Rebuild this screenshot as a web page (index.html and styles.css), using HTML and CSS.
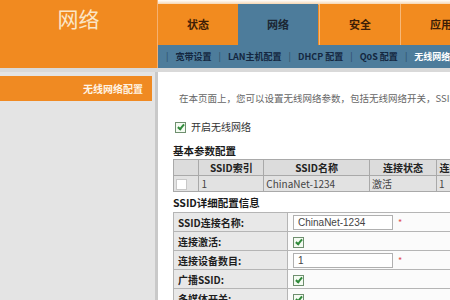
FILE: index.html
```html
<!DOCTYPE html>
<html lang="zh-CN">
<head>
    <meta charset="UTF-8">
    <title>网络 - 无线网络配置</title>
    <link rel="stylesheet" href="styles.css">
</head>
<body>
    <div class="top">
        <div class="brand">网络</div>
        <div class="nav">
            <div class="tabs">
                <div class="tab">状态</div>
                <div class="tab on">网络</div>
                <div class="tab">安全</div>
                <div class="tab">应用</div>
            </div>
            <div class="subnav">
                <span class="sep">|</span><span>宽带设置</span>
                <span class="sep">|</span><span>LAN主机配置</span>
                <span class="sep">|</span><span>DHCP 配置</span>
                <span class="sep">|</span><span>QoS 配置</span>
                <span class="sep">|</span><span class="cur">无线网络配置</span>
            </div>
        </div>
    </div>
    <div class="rule"></div>

    <div class="main">
        <div class="side">
            <div class="sideitem">无线网络配置</div>
        </div>
        <div class="content">
            <p class="desc">在本页面上，您可以设置无线网络参数，包括无线网络开关，SSID配置等。</p>
            <label class="enable"><span class="chk on"></span>开启无线网络</label>

            <h4>基本参数配置</h4>
            <table class="grid">
                <tr>
                    <th class="c0"></th>
                    <th class="c1">SSID索引</th>
                    <th class="c2">SSID名称</th>
                    <th class="c3">连接状态</th>
                    <th class="c4">连接设备数目</th>
                </tr>
                <tr>
                    <td><span class="chk"></span></td>
                    <td>1</td>
                    <td>ChinaNet-1234</td>
                    <td>激活</td>
                    <td>1</td>
                </tr>
            </table>

            <h4 class="sub">SSID详细配置信息</h4>
            <table class="detail">
                <tr>
                    <th>SSID连接名称:</th>
                    <td><span class="field">ChinaNet-1234</span><span class="req">*</span></td>
                </tr>
                <tr>
                    <th>连接激活:</th>
                    <td><span class="chk on"></span></td>
                </tr>
                <tr>
                    <th>连接设备数目:</th>
                    <td><span class="field">1</span><span class="req">*</span></td>
                </tr>
                <tr>
                    <th>广播SSID:</th>
                    <td><span class="chk on"></span></td>
                </tr>
                <tr>
                    <th>多媒体开关:</th>
                    <td><span class="chk on"></span></td>
                </tr>
            </table>
        </div>
    </div>
</body>
</html>
```

FILE: styles.css
```css
body {
    margin: 0;
    width: 450px;
    height: 300px;
    overflow: hidden;
    font-family: "Noto Sans CJK SC", "Liberation Sans", sans-serif;
    background-color: #e4e4e4;
}
.top {
    display: flex;
    height: 68px;
    background-color: #f18a20;
}
.brand {
    flex-shrink: 0;
    width: 157px;
    padding-top: 5px;
    text-align: center;
    font-size: 21px;
    line-height: 26px;
    color: #fbe6c6;
    border-right: 1px solid #f5b070;
}
.nav {
    flex: 1;
    min-width: 0;
    display: flex;
    flex-direction: column;
    overflow: hidden;
}
.tabs {
    display: flex;
    height: 45px;
    padding-top: 4px;
    box-sizing: border-box;
    background: linear-gradient(#ffffff, #f6d7b4 4px, #f18a20 5px);
}
.tab {
    flex-shrink: 0;
    width: 80px;
    padding-top: 12px;
    text-align: center;
    font-size: 11px;
    font-weight: bold;
    line-height: 16px;
    color: #3e1e06;
    background-color: #f28b1f;
    border-left: 1px solid #f7b878;
}
.tab:first-child {
    border-left: none;
}
.tab.on {
    background-color: #4d7c9b;
    color: #1b2633;
    border-left: none;
}
.tab.on + .tab {
    margin-left: 1px;
}
.subnav {
    flex: 1;
    display: flex;
    align-items: center;
    padding-left: 8px;
    background-color: #4d7c9b;
    font-size: 9px;
    font-weight: bold;
    color: #142740;
    white-space: nowrap;
}
.subnav .sep {
    margin: 0 7px;
    font-weight: normal;
    color: #2c4a66;
}
.subnav .sep:first-child {
    margin-left: 0;
}
.subnav .cur {
    color: #ffffff;
}
.rule {
    height: 4px;
    background-color: #d9d9d9;
}
.main {
    display: flex;
    height: 228px;
}
.side {
    flex-shrink: 0;
    width: 155px;
    padding-top: 4px;
    border-right: 3px solid #c9c9c9;
    background-color: #e4e4e4;
}
.sideitem {
    width: 152px;
    height: 25px;
    padding-right: 9px;
    box-sizing: border-box;
    text-align: right;
    font-size: 10px;
    font-weight: bold;
    line-height: 25px;
    color: #fff4e6;
    background-color: #f08a22;
}
.content {
    flex: 1;
    min-width: 0;
    padding-left: 15px;
    background-color: #ffffff;
    overflow: hidden;
    white-space: nowrap;
}
.desc {
    margin: 19px 0 0 6px;
    font-size: 9.5px;
    line-height: 14px;
    color: #666666;
}
.enable {
    display: flex;
    align-items: center;
    margin: 15px 0 0 2px;
    font-size: 10px;
    line-height: 14px;
    color: #333333;
}
.enable .chk {
    margin-right: 5px;
}
.chk {
    display: inline-block;
    width: 9px;
    height: 9px;
    border: 1px solid #9a9a9a;
    background-color: #ffffff;
    vertical-align: middle;
    position: relative;
}
.chk.on {
    border-color: #6f8f6f;
    background-color: #f4fbf2;
}
.chk.on::after {
    content: "";
    position: absolute;
    left: 3px;
    top: 0;
    width: 2px;
    height: 5px;
    border: solid #2f8a3a;
    border-width: 0 2px 2px 0;
    transform: rotate(40deg);
}
h4 {
    margin: 10px 0 1px;
    font-size: 10.5px;
    line-height: 14px;
    color: #1a1a1a;
}
h4.sub {
    margin-top: 4px;
    margin-bottom: 2px;
}
.grid {
    width: 330px;
    border-collapse: collapse;
    table-layout: fixed;
    font-size: 10px;
}
.grid th,
.grid td {
    height: 15px;
    padding: 0 2px;
    border: 1px solid #a9a9a9;
    line-height: 13px;
    overflow: hidden;
}
.grid th {
    background-color: #dcdcdc;
    color: #222222;
}
.grid td {
    background-color: #e2e2e2;
    color: #444444;
}
.grid .c0 { width: 20px; }
.grid .c1 { width: 59px; }
.grid .c2 { width: 99px; }
.grid .c3 { width: 61px; }
.grid .c4 { width: 60px; }
.grid td .chk {
    border-color: #c8c8c8;
}
.detail {
    width: 300px;
    border-collapse: collapse;
    font-size: 10px;
}
.detail th,
.detail td {
    height: 19px;
    padding-top: 0;
    padding-bottom: 0;
    border: 1px solid #b5b5b5;
    line-height: 13px;
    box-sizing: border-box;
}
.detail th {
    width: 114px;
    padding-left: 4px;
    text-align: left;
    background-color: #e8e8e8;
    color: #1e1e1e;
}
.detail td {
    padding-left: 5px;
    background-color: #fbfbfb;
}
.field {
    display: inline-block;
    width: 94px;
    height: 13px;
    padding-left: 4px;
    border: 1px solid #b0b0b0;
    background-color: #ffffff;
    font-family: "Liberation Sans", sans-serif;
    color: #444444;
    vertical-align: middle;
}
.req {
    margin-left: 5px;
    font-size: 9px;
    color: #e05050;
    vertical-align: middle;
}
```
